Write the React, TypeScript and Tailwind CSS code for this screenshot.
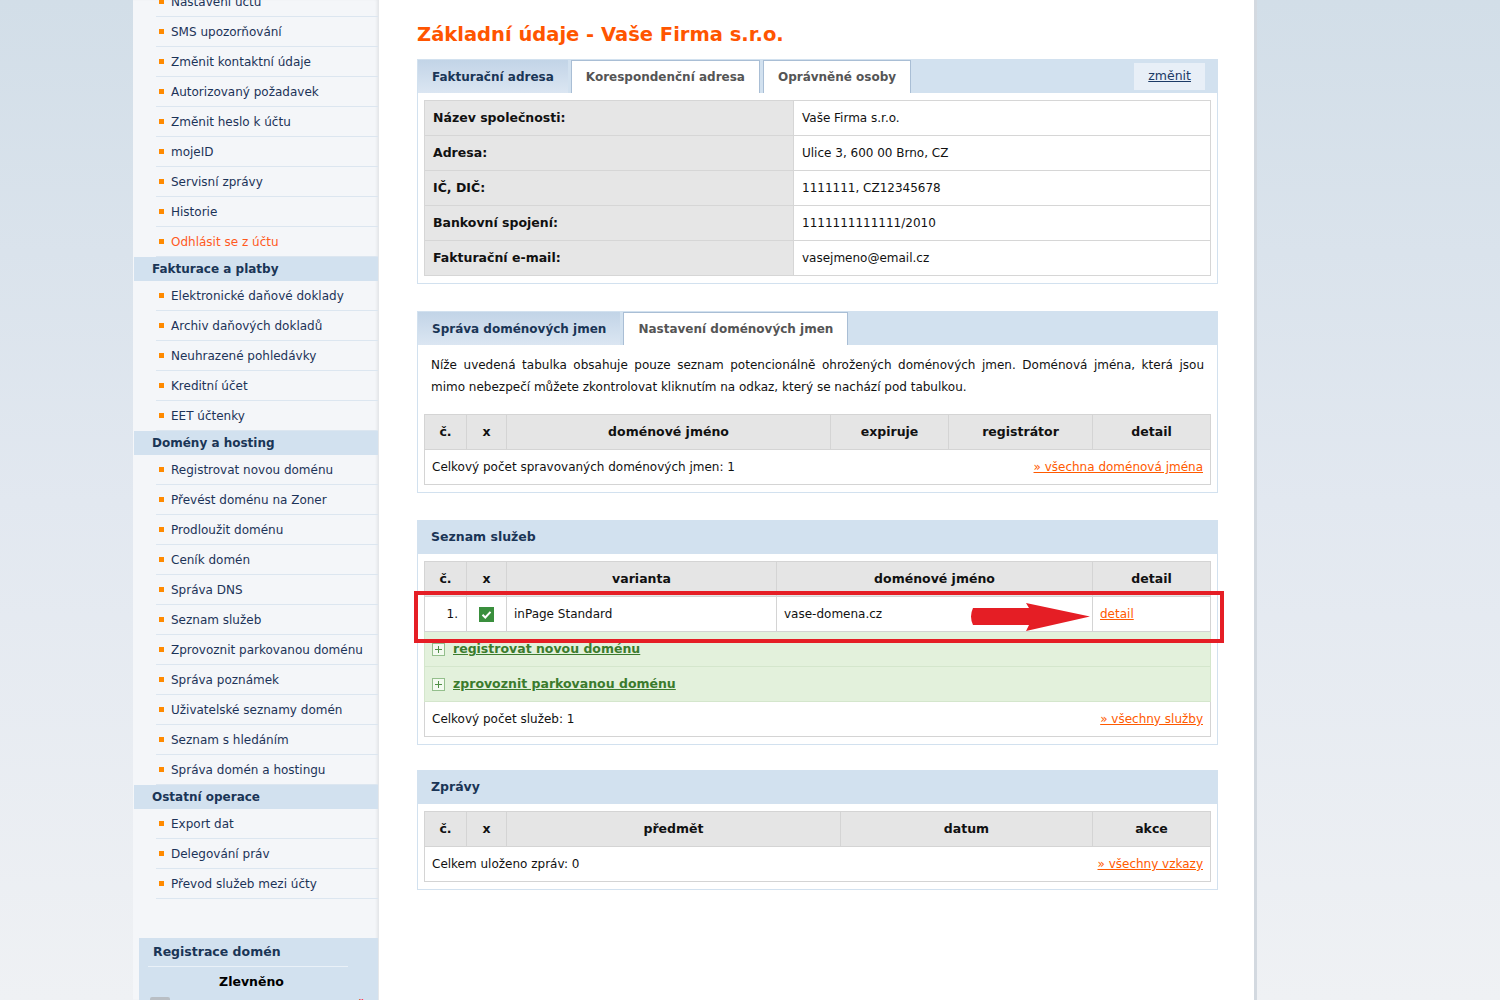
const font = "font-['DejaVu_Sans',sans-serif]";

const SideItem = ({ label, red }: { label: string; red?: boolean }) => (
  <li className="ml-[22px] h-[30px] flex items-center border-b border-[#dce6f0]">
    <span className="ml-[3px] w-[5px] h-[5px] bg-[#ff8a00] shrink-0" />
    <span className={`ml-[7px] text-[12px] ${red ? "text-[#ff5a1e]" : "text-[#1c3358]"}`}>{label}</span>
  </li>
);

const SideHeader = ({ label }: { label: string }) => (
  <li className="h-[24px] flex items-center pl-[18px] bg-[#d2e1ef] text-[12px] font-bold text-[#1a3556]">{label}</li>
);

const Sidebar = () => {
  const top = ["Nastavení účtu", "SMS upozorňování", "Změnit kontaktní údaje", "Autorizovaný požadavek", "Změnit heslo k účtu", "mojeID", "Servisní zprávy", "Historie"];
  const billing = ["Elektronické daňové doklady", "Archiv daňových dokladů", "Neuhrazené pohledávky", "Kreditní účet", "EET účtenky"];
  const domains = ["Registrovat novou doménu", "Převést doménu na Zoner", "Prodloužit doménu", "Ceník domén", "Správa DNS", "Seznam služeb", "Zprovoznit parkovanou doménu", "Správa poznámek", "Uživatelské seznamy domén", "Seznam s hledáním", "Správa domén a hostingu"];
  const other = ["Export dat", "Delegování práv", "Převod služeb mezi účty"];
  return (
    <aside className="w-[246px] shrink-0 bg-[#f4f6f9] shadow-[inset_-3px_0_3px_-1px_rgba(0,0,0,0.07)]">
      <ul className="-mt-[13px] pl-[1px] pr-[1px]">
        {top.map((t) => <SideItem key={t} label={t} />)}
        <SideItem label="Odhlásit se z účtu" red />
        <SideHeader label="Fakturace a platby" />
        {billing.map((t) => <SideItem key={t} label={t} />)}
        <SideHeader label="Domény a hosting" />
        {domains.map((t) => <SideItem key={t} label={t} />)}
        <SideHeader label="Ostatní operace" />
        {other.map((t) => <SideItem key={t} label={t} />)}
      </ul>
      <div className="mt-[39px] ml-[6px] mr-[1px] bg-[#d2e1ef] pt-[4px] pb-[10px]">
        <div className="pl-[14px] text-[12.5px] font-bold text-[#1a3556] leading-[20px]">Registrace domén</div>
        <div className="ml-[9px] mr-[30px] mt-[4px] border-t border-[#eaf1f8]" />
        <div className="pr-[14px] text-center text-[12.5px] font-bold text-black mt-[5px] leading-[20px]">Zlevněno</div>
        <div className="flex items-center mt-[4px] pl-[11px] pr-[14px] text-[12px]">
          <span className="w-[20px] h-[16px] bg-[#b9bec4] rounded-[2px]" />
          <span className="ml-[8px] text-[#1c3358]">.cz</span>
          <span className="ml-auto font-bold text-[#ff1a1a]">199,00 Kč</span>
        </div>
      </div>
    </aside>
  );
};

const Tab = ({ label, active }: { label: string; active?: boolean }) => (
  <div
    className={
      active
        ? "h-full flex items-center px-[14px] bg-gradient-to-b from-[#c2d4e7] to-[#dbe6f2] text-[#1a3556] font-bold text-[12px]"
        : "h-full flex items-center px-[14px] ml-[3px] bg-white border border-b-0 border-[#a9bed5] text-[#555] font-bold text-[12px]"
    }
  >
    {label}
  </div>
);

const Box = ({ header, children, className = "" }: { header: React.ReactNode; children: React.ReactNode; className?: string }) => (
  <div className={`relative w-[801px] border border-[#d2e1ef] ${className}`}>
    <div className="h-[33px] bg-[#d2e1ef] flex items-stretch">{header}</div>
    <div className="px-[6px] pt-[7px] pb-[7px]">{children}</div>
  </div>
);

const Th = ({ children, w }: { children: React.ReactNode; w?: string }) => (
  <th className={`border border-[#d4d4d4] bg-[#e5e5e5] h-[35px] text-center font-bold text-[12.5px] text-[#111] ${w ?? ""}`}>{children}</th>
);

const Footer = ({ text, link, cols }: { text: string; link: string; cols: number }) => (
  <tr>
    <td colSpan={cols} className="border border-[#d4d4d4] h-[35px] px-[7px]">
      <div className="flex justify-between text-[12px] text-[#111]">
        <span>{text}</span>
        <a className="text-[#ff5a00] underline">{link}</a>
      </div>
    </td>
  </tr>
);

const Check = () => (
  <svg width="15" height="15" viewBox="0 0 15 15" className="inline-block align-middle">
    <rect width="15" height="15" fill="#3a8f3d" />
    <path d="M3.5 7.8 L6.3 10.5 L11.5 4.8" stroke="#fff" strokeWidth="2" fill="none" />
  </svg>
);

const Plus = () => (
  <svg width="13" height="13" viewBox="0 0 13 13" className="shrink-0">
    <rect x="0.5" y="0.5" width="12" height="12" fill="#f3faf0" stroke="#94bf8c" />
    <path d="M6.5 3 V10 M3 6.5 H10" stroke="#4f8f45" strokeWidth="1" />
  </svg>
);

const GreenRow = ({ label }: { label: string }) => (
  <tr>
    <td colSpan={5} className="h-[35px] bg-[#e3f1dc] border border-[#d4e6cc] px-[7px]">
      <div className="flex items-center gap-[8px]">
        <Plus />
        <a className="font-bold text-[12.5px] text-[#3b7b2d] underline">{label}</a>
      </div>
    </td>
  </tr>
);

const InfoRow = ({ label, value }: { label: string; value: string }) => (
  <tr className="h-[35px]">
    <td className="w-[369px] border border-[#d6d6d6] bg-[#e6e6e6] px-[8px] font-bold text-[12.5px] text-[#111]">{label}</td>
    <td className="border border-[#d6d6d6] px-[8px] text-[12px] text-[#111]">{value}</td>
  </tr>
);

export default function App() {
  return (
    <div className={`${font} h-screen overflow-hidden bg-gradient-to-b from-[#d2dee8] via-[#e2e8f0] to-[#eff1f4]`}>
      <div className="ml-[133px] w-[1124px] h-full flex">
        <Sidebar />
        <main className="flex-1 bg-white border-r-[3px] border-[#d3d9e0] pl-[38px] pt-[21px]">
          <h1 className="text-[19.5px] leading-[27px] font-bold text-[#ff5500] mb-[11px]">Základní údaje - Vaše Firma s.r.o.</h1>

          <Box
            header={
              <>
                <Tab label="Fakturační adresa" active />
                <Tab label="Korespondenční adresa" />
                <Tab label="Oprávněné osoby" />
                <div className="ml-auto mr-[12px] mt-[3px] mb-[3px] px-[14px] bg-[#e8eff7] flex items-center text-[12.5px] text-[#1b3a66] underline">změnit</div>
              </>
            }
          >
            <table className="w-full border-collapse">
              <tbody>
                <InfoRow label="Název společnosti:" value="Vaše Firma s.r.o." />
                <InfoRow label="Adresa:" value="Ulice 3, 600 00 Brno, CZ" />
                <InfoRow label="IČ, DIČ:" value="1111111, CZ12345678" />
                <InfoRow label="Bankovní spojení:" value="1111111111111/2010" />
                <InfoRow label="Fakturační e-mail:" value="vasejmeno@email.cz" />
              </tbody>
            </table>
          </Box>

          <Box
            className="mt-[27px]"
            header={
              <>
                <Tab label="Správa doménových jmen" active />
                <Tab label="Nastavení doménových jmen" />
              </>
            }
          >
            <div className="px-[7px] pt-[2px] text-[12px] leading-[22px] text-[#111]">
              <div className="text-justify [text-align-last:justify]">
                Níže uvedená tabulka obsahuje pouze seznam potencionálně ohrožených doménových jmen. Doménová jména, která jsou
              </div>
              <div>mimo nebezpečí můžete zkontrolovat kliknutím na odkaz, který se nachází pod tabulkou.</div>
            </div>
            <table className="w-full border-collapse mt-[16px]">
              <thead>
                <tr>
                  <Th w="w-[42px]">č.</Th>
                  <Th w="w-[40px]">x</Th>
                  <Th w="w-[324px]">doménové jméno</Th>
                  <Th w="w-[118px]">expiruje</Th>
                  <Th w="w-[144px]">registrátor</Th>
                  <Th>detail</Th>
                </tr>
              </thead>
              <tbody>
                <Footer cols={6} text="Celkový počet spravovaných doménových jmen: 1" link="» všechna doménová jména" />
              </tbody>
            </table>
          </Box>

          <Box
            className="mt-[27px]"
            header={<div className="flex items-center pl-[13px] font-bold text-[12.5px] text-[#1a3556]">Seznam služeb</div>}
          >
            <table className="w-full border-collapse">
              <thead>
                <tr>
                  <Th w="w-[42px]">č.</Th>
                  <Th w="w-[40px]">x</Th>
                  <Th w="w-[270px]">varianta</Th>
                  <Th w="w-[316px]">doménové jméno</Th>
                  <Th>detail</Th>
                </tr>
              </thead>
              <tbody>
                <tr className="h-[35px] text-[12px] text-[#111]">
                  <td className="border border-[#d4d4d4] text-right pr-[8px]">1.</td>
                  <td className="border border-[#d4d4d4] text-center">
                    <Check />
                  </td>
                  <td className="border border-[#d4d4d4] px-[7px]">inPage Standard</td>
                  <td className="border border-[#d4d4d4] px-[7px]">vase-domena.cz</td>
                  <td className="border border-[#d4d4d4] px-[7px]">
                    <a className="text-[#ff5a00] underline">detail</a>
                  </td>
                </tr>
                <GreenRow label="registrovat novou doménu" />
                <GreenRow label="zprovoznit parkovanou doménu" />
                <Footer cols={5} text="Celkový počet služeb: 1" link="» všechny služby" />
              </tbody>
            </table>
            <div className="absolute left-[-4px] top-[70px] w-[810px] h-[52px] border-[4.5px] border-[#e51e25] pointer-events-none" />
            <svg className="absolute left-[551px] top-[82px]" width="122" height="28" viewBox="0 0 122 28">
              <path d="M4 5 L60 5 L57 0 L121 13.5 L57 28 L60 22 L4 22 Q0 13.5 4 5 Z" fill="#e51e25" />
            </svg>
          </Box>

          <Box
            className="mt-[25px]"
            header={<div className="flex items-center pl-[13px] font-bold text-[12.5px] text-[#1a3556]">Zprávy</div>}
          >
            <table className="w-full border-collapse">
              <thead>
                <tr>
                  <Th w="w-[42px]">č.</Th>
                  <Th w="w-[40px]">x</Th>
                  <Th w="w-[334px]">předmět</Th>
                  <Th w="w-[252px]">datum</Th>
                  <Th>akce</Th>
                </tr>
              </thead>
              <tbody>
                <Footer cols={5} text="Celkem uloženo zpráv: 0" link="» všechny vzkazy" />
              </tbody>
            </table>
          </Box>
        </main>
      </div>
    </div>
  );
}
